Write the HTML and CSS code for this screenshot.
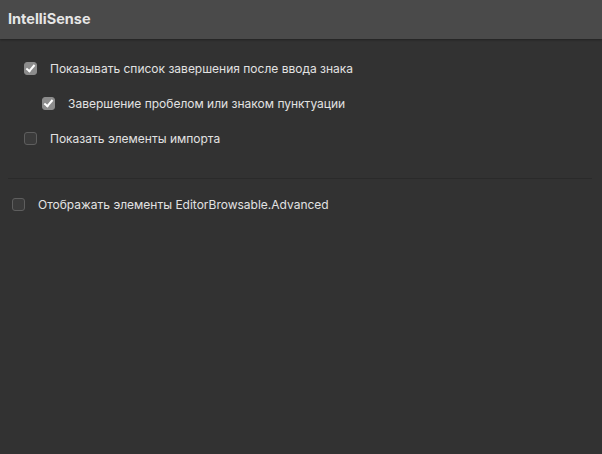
FILE: index.html
```html
<!DOCTYPE html>
<html lang="ru">
<head>
  <meta charset="UTF-8">
  <title>IntelliSense</title>
  <link rel="stylesheet" href="styles.css">
</head>
<body>
  <div class="header">IntelliSense</div>
  <div class="content">
    <div class="group">
      <label class="option">
        <span class="box checked"></span>
        <span>Показывать список завершения после ввода знака</span>
      </label>
      <label class="option sub">
        <span class="box checked"></span>
        <span>Завершение пробелом или знаком пунктуации</span>
      </label>
      <label class="option">
        <span class="box"></span>
        <span>Показать элементы импорта</span>
      </label>
    </div>
    <hr class="separator">
    <label class="option outer">
      <span class="box"></span>
      <span>Отображать элементы EditorBrowsable.Advanced</span>
    </label>
  </div>
</body>
</html>
```

FILE: styles.css
```css
/* General Styles */
body {
  margin: 0;
  height: 454px;
  background-color: #323232;
  font-family: Inter, "Liberation Sans", sans-serif;
  font-size: 12px;
  color: #e2e2e2;
  overflow: hidden;
}

.header {
  height: 39px;
  line-height: 38px;
  padding-left: 8px;
  background-color: #4a4a4a;
  font-weight: bold;
  font-size: 14.5px;
  color: #e6e6e6;
  box-shadow: 0 1px 2px rgba(0, 0, 0, 0.35);
  position: relative;
}

.content {
  padding: 0 10px 0 8px;
}

.group {
  padding: 19px 0 0 16px;
}

.option {
  display: flex;
  align-items: center;
  gap: 13px;
  height: 20px;
  margin-bottom: 15px;
}

.option.sub {
  margin-left: 18px;
}

.box {
  width: 11px;
  height: 11px;
  border: 1px solid #5e5e5e;
  border-radius: 3px;
  background-color: #3b3b3b;
  display: flex;
  align-items: center;
  justify-content: center;
}

.box.checked {
  background-color: #8c8c8c;
  border-color: #8c8c8c;
}

.box.checked::after {
  content: "";
  width: 3px;
  height: 7px;
  border: solid #fff;
  border-width: 0 2px 2px 0;
  transform: rotate(40deg);
  margin-top: -2px;
}

.separator {
  border: none;
  height: 1px;
  background-color: #2a2a2a;
  margin: 30px 0 15px 0;
}

.option.outer {
  margin-left: 4px;
}
```
